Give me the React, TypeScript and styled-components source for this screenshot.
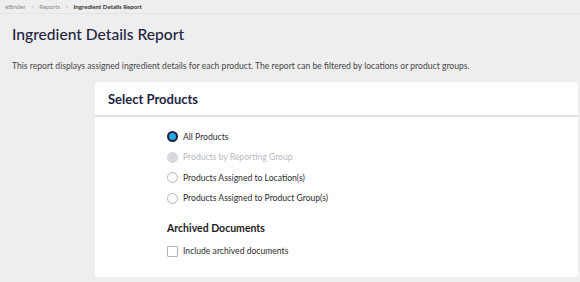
import styled, { createGlobalStyle } from 'styled-components';

const GlobalStyle = createGlobalStyle`
  html, body {
    margin: 0;
    padding: 0;
    background: #eeeeee;
    font-family: Lato, "Open Sans", sans-serif;
  }
`;

const Page = styled.div`
  width: 580px;
  height: 282px;
  overflow: hidden;
  background: #eeeeee;
`;

const Crumbs = styled.div`
  display: flex;
  align-items: center;
  gap: 5px;
  height: 13px;
  padding: 0 5px;
  border-bottom: 1px solid #e4e4e4;
  font-size: 6.1px;
  color: #8a8a8a;
`;

const Sep = styled.span`
  color: #c4c4c4;
`;

const Current = styled.span`
  color: #333;
  font-weight: 700;
`;

const Title = styled.h1`
  margin: 10px 0 0 12px;
  font-size: 15.6px;
  font-weight: 500;
  color: #1e2542;
  line-height: 20px;
`;

const Lead = styled.p`
  margin: 17px 0 0 12px;
  font-size: 8.6px;
  color: #474747;
  line-height: 11px;
`;

const Card = styled.section`
  margin: 10px 2px 0 95px;
  height: 195px;
  background: #fff;
  border-radius: 2px;
`;

const CardHead = styled.div`
  height: 33px;
  padding-left: 13px;
  display: flex;
  align-items: center;
  border-bottom: 2px solid #e4e4ee;
  font-size: 13px;
  font-weight: 700;
  color: #1e2542;
`;

const CardBody = styled.div`
  padding: 14px 0 0 72px;
`;

const Options = styled.div`
  display: flex;
  flex-direction: column;
  gap: 9.5px;
`;

const Option = styled.label<{ $disabled?: boolean }>`
  display: flex;
  align-items: center;
  gap: 5px;
  height: 11px;
  font-size: 8.6px;
  color: ${(p) => (p.$disabled ? '#b9b9c0' : '#2e2e33')};
`;

const Radio = styled.span<{ $state: 'on' | 'off' | 'disabled' }>`
  box-sizing: border-box;
  width: 11px;
  height: 11px;
  border-radius: 50%;
  border: ${(p) =>
    p.$state === 'on' ? '2px solid #1c2340' : p.$state === 'disabled' ? '1px solid #d6d6dc' : '1px solid #b4b4bc'};
  background: ${(p) => (p.$state === 'on' ? '#2aa7df' : p.$state === 'disabled' ? '#d9d9de' : '#fff')};
`;

const SubTitle = styled.h2`
  margin: 18px 0 0 0;
  font-size: 10.5px;
  font-weight: 700;
  color: #222;
  line-height: 13px;
`;

const Check = styled.span`
  box-sizing: border-box;
  width: 11px;
  height: 11px;
  border: 1px solid #b4b4bc;
  border-radius: 1px;
  background: #fff;
`;

const CheckRow = styled(Option)`
  margin-top: 11px;
`;

const App = () => (
  <Page>
    <GlobalStyle />
    <Crumbs>
      <span>eBinder</span>
      <Sep>&gt;</Sep>
      <span>Reports</span>
      <Sep>&gt;</Sep>
      <Current>Ingredient Details Report</Current>
    </Crumbs>
    <Title>Ingredient Details Report</Title>
    <Lead>
      This report displays assigned ingredient details for each product. The report can be filtered by locations or product groups.
    </Lead>
    <Card>
      <CardHead>Select Products</CardHead>
      <CardBody>
        <Options>
          <Option>
            <Radio $state="on" />
            All Products
          </Option>
          <Option $disabled>
            <Radio $state="disabled" />
            Products by Reporting Group
          </Option>
          <Option>
            <Radio $state="off" />
            Products Assigned to Location(s)
          </Option>
          <Option>
            <Radio $state="off" />
            Products Assigned to Product Group(s)
          </Option>
        </Options>
        <SubTitle>Archived Documents</SubTitle>
        <CheckRow>
          <Check />
          Include archived documents
        </CheckRow>
      </CardBody>
    </Card>
  </Page>
);

export default App;
